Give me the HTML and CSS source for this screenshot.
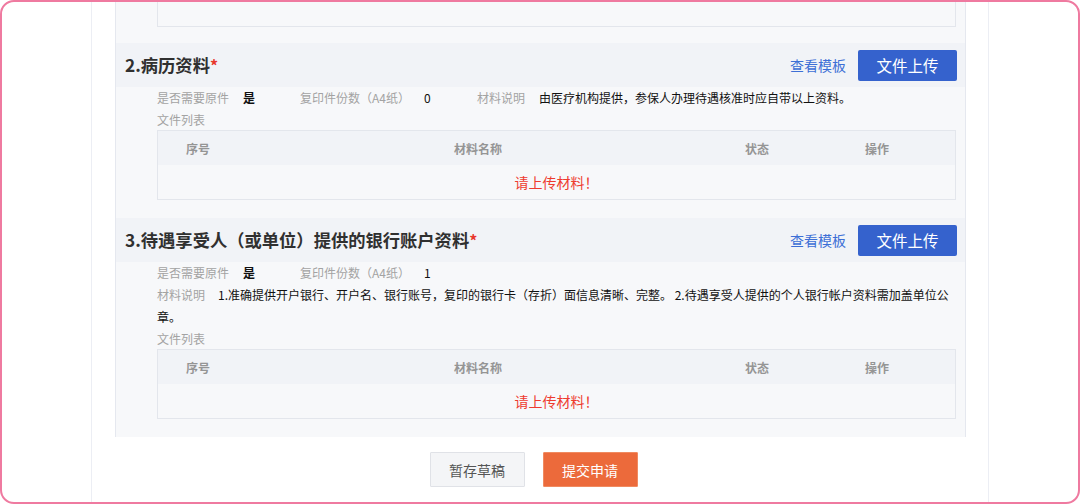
FILE: index.html
```html
<!DOCTYPE html>
<html lang="zh-CN">
<head>
<meta charset="utf-8">
<title>材料上传</title>
<link rel="stylesheet" href="styles.css">
</head>
<body>
<div class="frame">
  <div class="page">
    <div class="panel">
      <div class="prev-table"></div>

      <section class="material">
        <div class="mat-head">
          <h3 class="mat-title">2.病历资料<span class="req">*</span></h3>
          <div class="mat-actions">
            <a class="tpl-link">查看模板</a>
            <button class="upload-btn">文件上传</button>
          </div>
        </div>
        <div class="mat-body">
          <div class="info-row">
            <span class="info-item w1"><span class="lbl">是否需要原件</span><span class="val strong">是</span></span>
            <span class="info-item w2"><span class="lbl">复印件份数（A4纸）</span><span class="val">0</span></span>
            <span class="info-item"><span class="lbl">材料说明</span><span class="val">由医疗机构提供，参保人办理待遇核准时应自带以上资料。</span></span>
          </div>
          <div class="file-label">文件列表</div>
          <div class="file-table">
            <div class="ft-head"><span class="c1">序号</span><span>材料名称</span><span>状态</span><span>操作</span></div>
            <div class="ft-empty">请上传材料！</div>
          </div>
        </div>
      </section>

      <section class="material">
        <div class="mat-head">
          <h3 class="mat-title">3.待遇享受人（或单位）提供的银行账户资料<span class="req">*</span></h3>
          <div class="mat-actions">
            <a class="tpl-link">查看模板</a>
            <button class="upload-btn">文件上传</button>
          </div>
        </div>
        <div class="mat-body">
          <div class="info-row">
            <span class="info-item w1"><span class="lbl">是否需要原件</span><span class="val strong">是</span></span>
            <span class="info-item w2"><span class="lbl">复印件份数（A4纸）</span><span class="val">1</span></span>
          </div>
          <p class="info-desc"><span class="lbl lbl-d">材料说明</span><span class="desc-a">1.准确提供开户银行、开户名、银行账号，复印的银行卡（存折）面信息清晰、完整。 2.待遇享受人提供的个人银行帐户资料需加盖单位公</span><span class="desc-b">章。</span></p>
          <div class="file-label">文件列表</div>
          <div class="file-table">
            <div class="ft-head"><span class="c1">序号</span><span>材料名称</span><span>状态</span><span>操作</span></div>
            <div class="ft-empty">请上传材料！</div>
          </div>
        </div>
      </section>
    </div>

    <div class="actions">
      <button class="btn-draft">暂存草稿</button>
      <button class="btn-submit">提交申请</button>
    </div>
  </div>
</div>
</body>
</html>
```

FILE: styles.css
```css
* { box-sizing: border-box; }

html, body {
  margin: 0;
  padding: 0;
  width: 1080px;
  height: 504px;
  overflow: hidden;
  background: #ffffff;
}

body {
  font-family: "Noto Sans CJK SC", "Noto Sans", sans-serif;
  font-size: 12px;
  color: #222;
  text-spacing-trim: space-all;
  text-autospace: no-autospace;
}

.frame {
  width: 1080px;
  height: 504px;
  border: 2px solid #ef7aa0;
  border-radius: 14px;
  background: #fff;
  overflow: hidden;
  padding: 0 89px;
}

.page {
  height: 100%;
  border-left: 1px solid #eceef4;
  border-right: 1px solid #eceef4;
  padding: 0 22px 0 23px;
  background: #fff;
}

.panel {
  background: #f7f8fa;
  border-left: 1px solid #e5e8ef;
  border-right: 1px solid #e5e8ef;
}

.prev-table {
  height: 25px;
  margin: 0 9px 0 41px;
  border: 1px solid #e3e6ec;
  border-top: none;
}

.material {
  margin-top: 16px;
  padding-bottom: 18px;
}
.material + .material { margin-top: 0; }

.mat-head {
  height: 44px;
  background: #f1f3f7;
  display: flex;
  align-items: center;
  justify-content: space-between;
  padding: 0 8px 0 9px;
}

.mat-title {
  margin: 0;
  font-size: 17.3px;
  font-weight: bold;
  color: #303030;
  line-height: 24px;
}
.req {
  color: #e8372c;
  font-size: 16px;
}

.mat-actions {
  display: flex;
  align-items: center;
  gap: 12px;
}

.tpl-link {
  font-size: 14px;
  color: #3d6fd6;
  cursor: pointer;
}

.upload-btn {
  width: 99px;
  height: 31px;
  border: none;
  border-radius: 2px;
  background: #3562cd;
  color: #fff;
  font-family: inherit;
  font-size: 15.5px;
  padding: 0;
}

.mat-body {
  padding: 0 0 0 41px;
}

.info-row {
  display: flex;
  line-height: 22px;
  height: 22px;
  white-space: nowrap;
}
.info-item.w1 { width: 143px; }
.info-item.w2 { width: 177px; }

.lbl {
  color: #a3a3a3;
  margin-right: 14px;
}
.lbl-d {
  display: inline-block;
  width: 61px;
  margin-right: 0;
}

.val { color: #111; }
.val.strong { font-weight: bold; }

.info-desc {
  margin: 0;
  line-height: 22px;
  color: #111;
}

.file-label {
  color: #a3a3a3;
  line-height: 21px;
  height: 21px;
}

.file-table {
  margin-right: 9px;
  border: 1px solid #e3e6ec;
}

.ft-head {
  height: 34px;
  background: #f1f3f7;
  display: grid;
  grid-template-columns: 296px 291px 120px 1fr;
  align-items: center;
  font-weight: bold;
  color: #959595;
}
.ft-head .c1 { padding-left: 28px; }

.ft-empty {
  height: 34px;
  line-height: 34px;
  text-align: center;
  color: #ee3b2f;
  font-size: 14px;
}

.actions {
  display: flex;
  justify-content: center;
  gap: 18px;
  padding-top: 15px;
  padding-right: 14px;
}

.actions button {
  width: 95px;
  height: 35px;
  font-family: inherit;
  font-size: 14px;
  padding: 0;
  border-radius: 1px;
}

.btn-draft {
  background: #f4f5f7;
  border: 1px solid #e0e2e7;
  color: #555;
}

.btn-submit {
  background: #ec6a3b;
  border: 1px solid #f08a60;
  color: #fff;
}
```
